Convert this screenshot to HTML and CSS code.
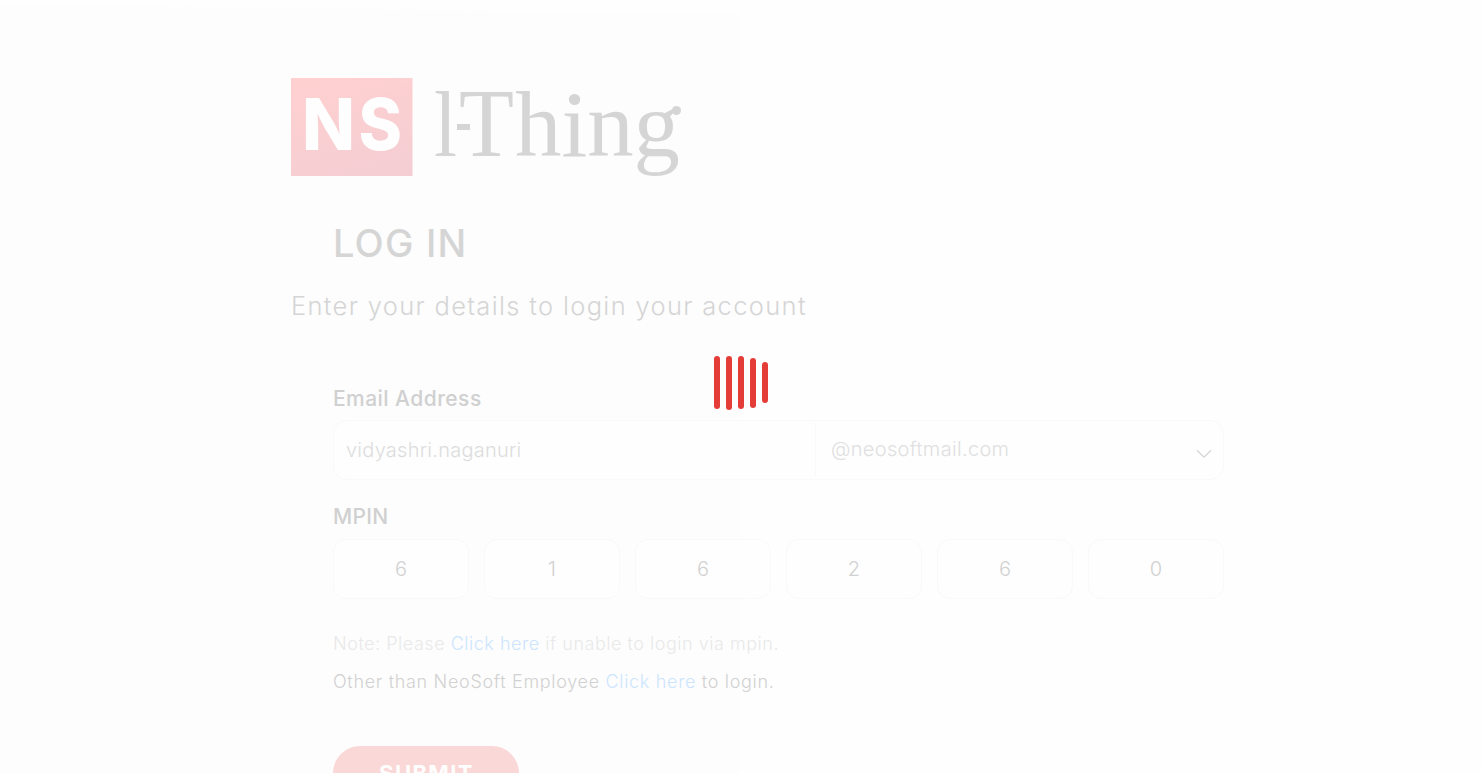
FILE: index.html
```html
<!DOCTYPE html>
<html lang="en">
<head>
<meta charset="utf-8">
<title>I-Thing Log In</title>
<link rel="stylesheet" href="styles.css">
</head>
<body>
<svg class="backdrop" viewBox="0 0 1482 773" aria-hidden="true"><path d="M0 4L34 4.500L740 14V773H0Z"/></svg>
<main class="page">
  <svg class="logo" viewBox="0 0 392 98" role="img" aria-label="NS I-Thing">
    <defs><linearGradient id="brand" x1=".3" y1="0" x2=".7" y2="1"><stop offset="0" stop-color="#ffd0d0"/><stop offset="1" stop-color="#f4ced3"/></linearGradient></defs>
    <rect width="121.500" height="98" fill="url(#brand)"/>
    <g class="mark">
      <text x="11" y="72" textLength="53" lengthAdjust="spacingAndGlyphs">N</text>
      <text x="67.500" y="72" textLength="43.500" lengthAdjust="spacingAndGlyphs">S</text>
    </g>
    <g class="word">
      <text x="143" y="77.500" textLength="23" lengthAdjust="spacingAndGlyphs">l</text>
      <rect x="166" y="46" width="13" height="6"/>
      <text class="cap" x="168" y="77.500" textLength="55" lengthAdjust="spacingAndGlyphs">T</text>
      <text x="224" y="77.500" textLength="165" lengthAdjust="spacingAndGlyphs">hing</text>
      <circle cx="283.700" cy="21.500" r="5.500"/>
      <circle cx="385.500" cy="32.500" r="4.500"/>
    </g>
  </svg>
  <h1 class="title">LOG IN</h1>
  <p class="subtitle">Enter your details to login your account</p>
  <form class="form">
    <label class="label">Email Address</label>
    <div class="email">
      <span class="user">vidyashri.naganuri</span>
      <span class="domain"><span class="domain-name">@neosoftmail.com</span>
        <svg class="chevron" viewBox="0 0 16 10"><path d="M1 1.200L8 8.200L15 1.200"/></svg>
      </span>
    </div>
    <label class="label mpin-label">MPIN</label>
    <div class="pins"><span>6</span><span>1</span><span>6</span><span>2</span><span>6</span><span>0</span></div>
    <p class="note muted">Note: Please <a>Click here</a> if unable to login via mpin.</p>
    <p class="note other">Other than NeoSoft Employee <a>Click here</a> to login.</p>
    <button class="submit" type="button">SUBMIT</button>
  </form>
</main>
<div class="loader"><i class="tall"></i><i class="peak"></i><i class="tall"></i><i class="mid"></i><i class="low"></i></div>
</body>
</html>
```
FILE: styles.css
```css
* { box-sizing: border-box; }
body { margin: 0; height: 773px; overflow: hidden; background: #fefefe; font-family: Inter, "Liberation Sans", sans-serif; font-weight: 300; color: #d5d5d5; }
.backdrop { position: absolute; left: 0; top: 0; width: 1482px; height: 773px; fill: #fdfdfd; }
.page { position: relative; padding: 78px 0 0 291px; height: 773px; overflow: hidden; }
.logo { display: block; width: 392px; height: 98px; overflow: visible; }
.mark { font: 800 72px Inter, sans-serif; fill: #fefefe; }
.word { font: 93px "Liberation Serif", serif; fill: #d5d5d5; }
.cap { font-size: 97px; }
.title { margin: 42px 0 0 42px; font-size: 38px; line-height: 50px; font-weight: 450; letter-spacing: 1.200px; }
.subtitle { margin: 18px 0 0; font-size: 25.500px; line-height: 39px; letter-spacing: 1.330px; white-space: nowrap; }
.form { margin: 59px 0 0 42px; width: 891px; }
.label { display: block; font-size: 21px; line-height: 30px; font-weight: 500; color: #d0d0d0; letter-spacing: .450px; }
.email { display: flex; height: 60px; margin-top: 6px; border: 1px solid #f9f9f9; border-radius: 14px; background: #fefefe; font-size: 20px; line-height: 58px; color: #dcdddd; }
.user { width: 481px; padding-left: 12px; letter-spacing: .250px; }
.domain { display: flex; flex: 1; align-items: center; justify-content: space-between; height: 53px; margin-top: 2px; border-left: 1px solid #f9f9f9; padding: 0 11px 0 15px; }
.domain-name { color: #dfe0e1; letter-spacing: .330px; line-height: 56px; margin-top: -1px; }
.chevron { width: 16px; height: 10px; margin-top: 9px; fill: none; stroke: #d5d5d5; stroke-width: 1.300; }
.mpin-label { margin-top: 22px; letter-spacing: .300px; }
.pins { display: grid; grid-template-columns: repeat(6, 136px); gap: 15px; margin-top: 7px; }
.pins span { height: 60px; border: 1px solid #f9f9f9; border-radius: 13px; background: #fefefe; text-align: center; font-size: 20px; line-height: 59px; color: #d1d1d1; }
.note { margin: 0; font-size: 18px; line-height: 38px; color: #d1d1d1; white-space: nowrap; letter-spacing: .520px; }
.muted { margin-top: 26px; color: #e9e9e9; }
.other { letter-spacing: .680px; }
.note a { color: #cce5ff; }
.submit { display: block; width: 186px; height: 54px; margin-top: 45px; padding: 0 0 0 1px; border: 0; border-radius: 27px; background: #fad8d7; color: #fefefe; font: 700 22px Inter, sans-serif; letter-spacing: 1.400px; }
.loader { position: absolute; left: 714px; top: 355px; display: flex; gap: 6px; align-items: center; height: 55px; }
.loader i { width: 6px; height: 53px; border-radius: 3px; background: #e43d38; }
.loader .peak { height: 54px; }
.loader .mid { height: 50px; }
.loader .low { height: 41px; }
```
